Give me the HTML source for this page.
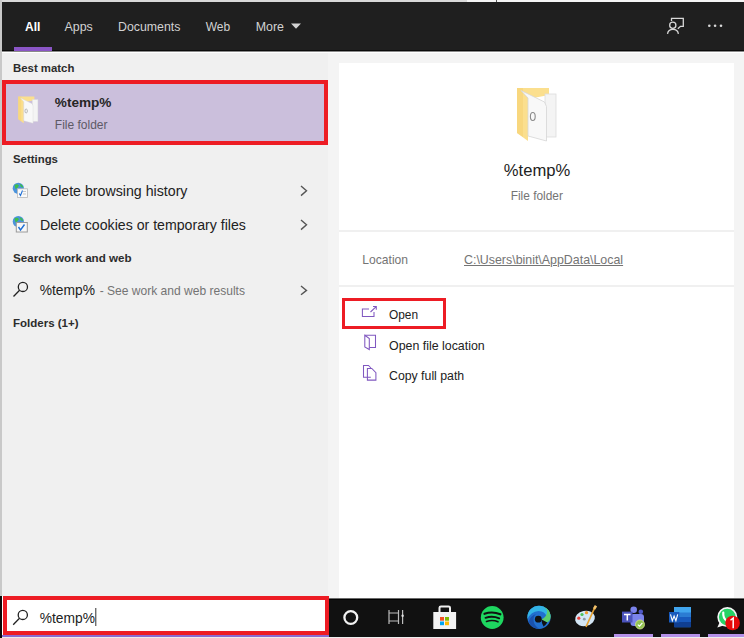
<!DOCTYPE html>
<html><head><meta charset="utf-8">
<style>
*{margin:0;padding:0;box-sizing:border-box}
html,body{width:744px;height:638px;overflow:hidden;background:#ededed;font-family:"Liberation Sans",sans-serif}
.a{position:absolute;white-space:pre;line-height:1}
.b{position:absolute}
#hdr{left:2px;top:2px;width:742px;height:49px;background:#1f1f1f}
#left{left:2px;top:52px;width:326px;height:544px;background:#f0f0f0}
#right{left:328px;top:52px;width:416px;height:546px;background:#f4f4f4}
#card{left:339px;top:63px;width:395px;height:535px;background:#fff}
.sep{left:339px;width:395px;height:2px;background:#f0f0f0}
#task{left:329px;top:598px;width:415px;height:39px;background:#111}
.red{position:absolute;border:4px solid #ed1c24}
svg{position:absolute;left:0;top:0}

</style></head><body>
<div class="b" style="left:0;top:0;width:467px;height:2px;background:#d9d9d9"></div>
<div class="b" style="left:467px;top:0;width:277px;height:2px;background:#f4f4f4"></div>
<div class="b" style="left:496px;top:0;width:1px;height:2px;background:#555"></div>
<div class="b" style="left:0;top:0;width:2px;height:598px;background:#c9c9c9"></div>
<div class="b" id="hdr"></div>
<div class="b" style="left:2px;top:50px;width:742px;height:1px;background:#0a0a0a"></div>
<div class="b" style="left:2px;top:51px;width:742px;height:1px;background:#8a8a8a"></div>
<div class="b" style="left:14px;top:47px;width:38px;height:4px;background:#8a55c6"></div>
<div class="b" id="left"></div>
<div class="b" id="right"></div>
<div class="b" style="left:2px;top:52px;width:742px;height:1px;background:#ffffff"></div>
<div class="b" id="card"></div>
<div class="b sep" style="top:230px"></div>
<div class="b sep" style="top:285px"></div>
<div class="b" style="left:6px;top:84px;width:318px;height:57px;background:#cbbfdc"></div>
<div class="red" style="left:2px;top:80px;width:326px;height:65px"></div>
<div class="red" style="left:342px;top:298px;width:104px;height:31px;border-width:3.5px"></div>
<div class="b" style="left:0;top:596px;width:2px;height:42px;background:#0a0a0a"></div>
<div class="b" style="left:2px;top:596px;width:327px;height:41px;background:#8a6bd0"></div>
<div class="b" style="left:2px;top:596px;width:327px;height:39px;background:#fff"></div>
<div class="red" style="left:3px;top:596px;width:326px;height:39px"></div>
<div class="b" id="task"></div>
<div class="b" style="left:329px;top:598px;width:415px;height:1px;background:#6a6a6a"></div>
<div class="b" style="left:329px;top:599px;width:415px;height:1px;background:#000"></div>
<div class="b" style="left:614px;top:634px;width:39px;height:3px;background:#b490e8"></div>
<div class="b" style="left:661px;top:634px;width:39px;height:3px;background:#b490e8"></div>
<div class="b" style="left:708px;top:634px;width:36px;height:3px;background:#b490e8"></div>
<svg width="744" height="638" viewBox="0 0 744 638">
<defs>
 <g id="fold">
  <polygon points="0,0 32,0 32,7 11,11 11,53 0,45" fill="#fbdf8e"/>
  <polygon points="0,0 6,0 6,49 0,45" fill="#f5cf6a" opacity="0.45"/>
  <rect x="28" y="6" width="11" height="43" fill="#f4f4f4" stroke="#dddddd" stroke-width="0.8"/>
  <polygon points="4,2.5 27.5,14 29.5,18.5 29.5,53 11,48 11,10" fill="#f8f8f8" stroke="#d6d6d6" stroke-width="0.8"/>
  <ellipse cx="15.8" cy="28.5" rx="2.4" ry="4" fill="none" stroke="#8a8a8a" stroke-width="1.1"/>
 </g>
</defs>
<!-- header icons -->
<polygon points="291,23.5 301,23.5 296,28.8" fill="#d2d2d2"/>
<g fill="none" stroke="#d8d8d8" stroke-width="1.3">
 <path d="M671.5,21 V18.3 H683.3 V26.3 H680.5 L677.8,28.8"/>
 <circle cx="672.8" cy="25.2" r="3.1"/>
 <path d="M667.5,33.8 A5.5,5.2 0 0 1 678.4,33.8"/>
</g>
<g fill="#d8d8d8"><circle cx="709.3" cy="25.7" r="1.3"/><circle cx="715.1" cy="25.7" r="1.3"/><circle cx="721" cy="25.7" r="1.3"/></g>
<!-- folders -->
<use href="#fold" transform="translate(517,88)"/>
<use href="#fold" transform="translate(18.2,96.6) scale(0.505)"/>
<!-- settings icons -->
<g>
 <circle cx="18.3" cy="188.3" r="5.6" fill="#4a93dc"/>
 <path d="M14.5,185 Q17,183.5 19,185.5 Q18,188 15.5,189 Z M19.5,183.5 Q22.5,184.5 23.5,187.5 L21,187 Z" fill="#3fbf4a"/>
 <rect x="17.5" y="188.8" width="10" height="8.7" fill="#fafafa" stroke="#b8b8b8" stroke-width="0.8"/>
 <path d="M19.3,193.5 L20.5,195.5 L22.5,190.5" fill="none" stroke="#1e6fd6" stroke-width="1.1"/>
 <path d="M23,191.5 H26 M23,194 H26" stroke="#b0b0b0" stroke-width="0.7"/>
</g>
<g>
 <circle cx="18.3" cy="221.5" r="5.6" fill="#4a93dc"/>
 <path d="M14.5,218.5 Q17,217 19,219 Q18,221.5 15.5,222.5 Z M19.5,217 Q22.5,218 23.5,221 L21,220.5 Z" fill="#3fbf4a"/>
 <rect x="16.3" y="222.5" width="11" height="9.5" fill="#f7f7f7" stroke="#9a9a9a" stroke-width="1"/>
 <path d="M18.5,227 L20.5,230 L24.5,224.5" fill="none" stroke="#1e6fd6" stroke-width="1.4"/>
</g>
<!-- web search icon -->
<g fill="none" stroke="#222" stroke-width="1.3">
 <circle cx="22.9" cy="286.9" r="4.6"/>
 <path d="M19.6,290.3 L13.5,296.5"/>
</g>
<!-- chevrons -->
<g fill="none" stroke="#555" stroke-width="1.4">
 <path d="M301,186 L306.5,190.8 L301,195.6"/>
 <path d="M301,220 L306.5,224.8 L301,229.6"/>
 <path d="M301,286 L306.5,290.4 L301,294.8"/>
</g>
<!-- action icons -->
<g fill="none" stroke="#8058c0" stroke-width="1.05">
 <path d="M369,308.9 H362.4 V316.5 H374 V312"/>
 <path d="M370.5,312 L376.2,306.6 M373,306.4 H376.3 V309.7"/>
 <path d="M364.8,335.3 H375.5 V347.5 H369.3"/>
 <path d="M364.8,335.3 L369.3,338.5 V349.5 L364.8,347 Z"/>
 <path d="M370.8,377.2 H363.5 V365.5 H368.5 L371,368"/>
 <path d="M367.4,368.5 H371.8 L375.9,372.6 V380.1 H367.4 Z"/>
</g>
<!-- search box icon -->
<g fill="none" stroke="#222" stroke-width="1.3">
 <circle cx="22.8" cy="614.9" r="4.6"/>
 <path d="M19.5,618.3 L13.2,624.8"/>
</g>
<rect x="95.3" y="608" width="1" height="18" fill="#333"/>
<!-- taskbar -->
<circle cx="350.8" cy="617.5" r="6.4" fill="none" stroke="#f2f2f2" stroke-width="2.3"/>
<g fill="none" stroke="#bdbdbd" stroke-width="1.2">
 <path d="M389,610 V624 M398.5,610 V624 M389,613 H398.5 M389,621 H398.5"/>
 <path d="M402.6,610 V624"/>
</g>
<circle cx="402.6" cy="615.8" r="1.2" fill="#e0e0e0"/>
<!-- store -->
<path d="M439.5,612.5 V607.8 Q439.5,606.5 441,606.5 H448.5 Q450,606.5 450,607.8 V612.5" fill="none" stroke="#f0f0f0" stroke-width="2"/>
<rect x="433.3" y="612" width="22.8" height="17" fill="#f2f2f2"/>
<rect x="440" y="617" width="4" height="3.7" fill="#f25022"/>
<rect x="445" y="617" width="4" height="3.7" fill="#7fba00"/>
<rect x="440" y="621.5" width="4" height="3.7" fill="#00a4ef"/>
<rect x="445" y="621.5" width="4" height="3.7" fill="#ffb900"/>
<!-- spotify -->
<circle cx="492.2" cy="617.5" r="11.4" fill="#1ed760"/>
<g fill="none" stroke="#111" stroke-linecap="round">
 <path d="M484.5,613.8 Q492.5,611 500.3,614.3" stroke-width="2.2"/>
 <path d="M485.5,617.8 Q492.5,615.5 499.2,618.3" stroke-width="1.9"/>
 <path d="M486.5,621.5 Q492.5,619.5 498,621.8" stroke-width="1.6"/>
</g>
<!-- edge -->
<circle cx="539" cy="617.3" r="11.6" fill="#2170cf"/>
<path d="M527.4,617.3 A11.6,11.6 0 0 1 550.6,617.3 L547,617.3 Q545,611 538.5,611 Q531,611.5 527.4,619 Z" fill="#33b4e6"/>
<path d="M550.6,617.3 A11.6,11.6 0 0 0 543,606.4 Q548,609 547,613 Q546,617 541.5,619.5 L547,622.5 Q550.6,620.5 550.6,617.3 Z" fill="#5ccf6c"/>
<path d="M528.5,622 Q531,628.5 539.5,628.9 Q534,626 533.5,620.5 Q533.3,616 536,614 Q530,616 528.5,622 Z" fill="#1a52ad"/>
<circle cx="538.3" cy="619.2" r="3.4" fill="#111"/>
<path d="M541.5,619.5 L547.3,622.6 Q546,624.8 543.5,626.5 Q541.5,623 541.5,619.5 Z" fill="#111"/>
<!-- paint -->
<ellipse cx="585" cy="618.4" rx="10" ry="7.6" fill="#d3e6f5" transform="rotate(-12 585 618.4)"/>
<circle cx="584.3" cy="619.2" r="1.4" fill="#8c9aa6"/>
<circle cx="578.8" cy="618.2" r="1.6" fill="#e8413b"/>
<circle cx="582" cy="614.5" r="1.6" fill="#4cc35a"/>
<circle cx="586.5" cy="612.7" r="1.6" fill="#f39a2b"/>
<path d="M594.8,607.5 L586,627" stroke="#e5a030" stroke-width="1.7"/>
<path d="M594,609 L596,605.8" stroke="#f4c26b" stroke-width="2.6"/>
<!-- teams -->
<circle cx="633.7" cy="609.8" r="3.3" fill="#7b83eb"/>
<circle cx="640.8" cy="611.8" r="2.3" fill="#5059c9"/>
<rect x="630.5" y="614" width="13.5" height="12" rx="3" fill="#7b83eb"/>
<rect x="622" y="611.6" width="10.5" height="10.9" fill="#4b53bc"/>
<path d="M624,614.5 H630.5 M627.3,614.5 V620.5" stroke="#fff" stroke-width="1.5"/>
<circle cx="640" cy="624.5" r="4.5" fill="#92c353" stroke="#d8e28a" stroke-width="0.8"/>
<path d="M637.8,624.6 L639.5,626.2 L642.4,622.9" fill="none" stroke="#fff" stroke-width="1.2"/>
<!-- word -->
<rect x="674" y="607" width="17" height="20.2" rx="1" fill="#2b7cd3"/>
<rect x="674" y="607" width="17" height="5.5" fill="#41a5ee"/>
<rect x="674" y="617" width="17" height="5" fill="#185abd"/>
<rect x="674" y="622" width="17" height="5.2" fill="#103f91"/>
<rect x="669" y="612" width="10.3" height="10.5" fill="#185abd"/>
<path d="M670.5,614.3 L672.3,620.8 L674.1,616 L675.9,620.8 L677.7,614.3" fill="none" stroke="#fff" stroke-width="1.1"/>
<!-- whatsapp -->
<circle cx="727.3" cy="617.1" r="9.2" fill="#25d366" stroke="#f5f5f5" stroke-width="1.6"/>
<path d="M719.8,622 L717.3,627.5 L723.5,625.5 Z" fill="#f5f5f5"/>
<path d="M723.3,612.5 Q722.6,618.5 727.5,621.5" fill="none" stroke="#fff" stroke-width="2.2" stroke-linecap="round"/>
<circle cx="732.6" cy="623" r="7.3" fill="#e60a0a"/>
<path d="M730.5,620.3 L733.2,618 V628.3" fill="none" stroke="#fff" stroke-width="1.5"/>
</svg>

<div class="a" style="left:25px;top:21.04px;font-size:12px;font-weight:700;color:#ffffff;">All</div>
<div class="a" style="left:64.5px;top:20.70px;font-size:12.4px;font-weight:400;color:#d2d2d2;">Apps</div>
<div class="a" style="left:118px;top:20.75px;font-size:12.35px;font-weight:400;color:#d2d2d2;">Documents</div>
<div class="a" style="left:205.7px;top:21.04px;font-size:12.0px;font-weight:400;color:#d2d2d2;">Web</div>
<div class="a" style="left:255.7px;top:20.70px;font-size:12.4px;font-weight:400;color:#d2d2d2;">More</div>
<div class="a" style="left:13px;top:62.65px;font-size:11.4px;font-weight:700;color:#2c2c2c;">Best match</div>
<div class="a" style="left:54.8px;top:95.89px;font-size:13.6px;font-weight:700;color:#262626;">%temp%</div>
<div class="a" style="left:54.8px;top:118.94px;font-size:12.0px;font-weight:400;color:#5e5a66;">File folder</div>
<div class="a" style="left:13px;top:153.95px;font-size:11.4px;font-weight:700;color:#2c2c2c;">Settings</div>
<div class="a" style="left:40px;top:184.38px;font-size:14.2px;font-weight:400;color:#222222;">Delete browsing history</div>
<div class="a" style="left:40px;top:218.32px;font-size:14.15px;font-weight:400;color:#222222;">Delete cookies or temporary files</div>
<div class="a" style="left:13px;top:251.98px;font-size:11.6px;font-weight:700;color:#2c2c2c;">Search work and web</div>
<div class="a" style="left:39.7px;top:283.62px;font-size:13.8px;font-weight:400;color:#222222;">%temp%</div>
<div class="a" style="left:99.7px;top:285.10px;font-size:12.05px;font-weight:400;color:#747474;">- See work and web results</div>
<div class="a" style="left:13px;top:318.37px;font-size:11.5px;font-weight:700;color:#2c2c2c;">Folders (1+)</div>
<div class="a" style="left:503.8px;top:162.55px;font-size:16.6px;font-weight:400;color:#222222;">%temp%</div>
<div class="a" style="left:510.7px;top:190.73px;font-size:11.9px;font-weight:400;color:#747474;">File folder</div>
<div class="a" style="left:362.3px;top:253.96px;font-size:12.1px;font-weight:400;color:#747474;">Location</div>
<div class="a" style="left:464px;top:253.60px;font-size:12.4px;font-weight:400;color:#747474;text-decoration:underline;">C:\Users\binit\AppData\Local</div>
<div class="a" style="left:389px;top:310.23px;font-size:11.9px;font-weight:400;color:#222222;">Open</div>
<div class="a" style="left:389px;top:340.30px;font-size:12.4px;font-weight:400;color:#222222;">Open file location</div>
<div class="a" style="left:389px;top:370.29px;font-size:12.3px;font-weight:400;color:#222222;">Copy full path</div>
<div class="a" style="left:39.7px;top:611.92px;font-size:13.8px;font-weight:400;color:#222222;">%temp%</div>
</body></html>
